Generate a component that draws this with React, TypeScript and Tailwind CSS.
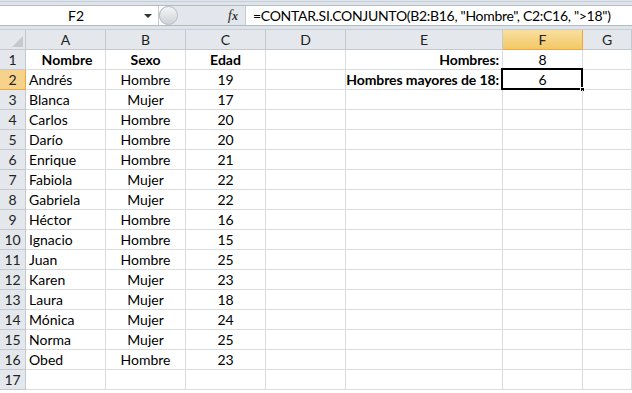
import React from "react";

const rows: [string, string, string][] = [
  ["Andrés", "Hombre", "19"],
  ["Blanca", "Mujer", "17"],
  ["Carlos", "Hombre", "20"],
  ["Darío", "Hombre", "20"],
  ["Enrique", "Hombre", "21"],
  ["Fabiola", "Mujer", "22"],
  ["Gabriela", "Mujer", "22"],
  ["Héctor", "Hombre", "16"],
  ["Ignacio", "Hombre", "15"],
  ["Juan", "Hombre", "25"],
  ["Karen", "Mujer", "23"],
  ["Laura", "Mujer", "18"],
  ["Mónica", "Mujer", "24"],
  ["Norma", "Mujer", "25"],
  ["Obed", "Hombre", "23"],
];

const font = { fontFamily: "Lato, 'Open Sans', sans-serif" };

function Cell({ children, className = "" }: { children?: React.ReactNode; className?: string }) {
  return (
    <div className={`h-[20px] border-r border-b border-[#dadcdd] flex items-center overflow-visible whitespace-nowrap text-[14px] text-black ${className}`}>
      {children}
    </div>
  );
}

export default function App() {
  const cols = ["A", "B", "C", "D", "E", "F", "G"];
  const widths = ["w-[80px]", "w-[80px]", "w-[80px]", "w-[80px]", "w-[157px]", "w-[80px]", "flex-1"];
  const allRows: { n: number; a: string; b: string; c: string; bold?: boolean }[] = [
    { n: 1, a: "Nombre", b: "Sexo", c: "Edad", bold: true },
    ...rows.map((r, i) => ({ n: i + 2, a: r[0], b: r[1], c: r[2] })),
    { n: 17, a: "", b: "", c: "" },
  ];
  return (
    <div className="w-[632px] h-[393px] bg-white overflow-hidden relative" style={font}>
      {/* top formula bar */}
      <div className="h-[30px] bg-[#dfe4ea] flex flex-col">
        <div className="h-[2px] border-b border-[#c7ced6]" />
        <div className="h-[3px]" />
        <div className="h-[21px] flex bg-white border-y border-[#b1bbc6]">
          <div className="w-[159px] flex items-center relative border-r border-[#c5ccd3]">
            <div className="flex-1 text-center text-[14px] text-black pl-[8px]">F2</div>
            <div className="w-0 h-0 border-l-[4px] border-r-[4px] border-t-[4px] border-l-transparent border-r-transparent border-t-[#333] mr-[6px]" />
          </div>
          <div className="w-[86px] flex items-center bg-[#e3e6ea] rounded-l-full border-l border-[#b7bec6] relative">
            <div className="w-[19px] h-[19px] rounded-full bg-gradient-to-b from-[#f4f5f6] to-[#cfd3d8] border border-[#b9bfc6] ml-[-1px]" />
            <div className="flex-1" />
            <span className="mr-[7px] text-[15px] italic text-[#333]" style={{ fontFamily: "'Liberation Serif', serif" }}>
              f<span className="text-[12px] font-bold">x</span>
            </span>
          </div>
          <div className="flex-1 flex items-center pl-[7px] text-[14px] tracking-[-0.3px] text-black border-l border-[#c5ccd3] whitespace-nowrap">
            =CONTAR.SI.CONJUNTO(B2:B16, "Hombre", C2:C16, "&gt;18")
          </div>
        </div>
        <div className="flex-1 border-b border-[#c7ced6]" />
      </div>

      {/* column headers */}
      <div className="flex h-[20px]">
        <div className="w-[26px] h-[20px] bg-[#e4e8ec] border-r border-b border-[#c4c9cf] relative">
          <svg className="absolute right-[2px] bottom-[2px]" width="11" height="11">
            <polygon points="11,0 11,11 0,11" fill="#c5cad0" />
          </svg>
        </div>
        {cols.map((c, i) => (
          <div
            key={c}
            className={`${widths[i]} h-[20px] flex items-center justify-center text-[14px] ${
              c === "F"
                ? "bg-gradient-to-b from-[#f9df9f] to-[#f3c865] border-r border-b border-[#f0a742] text-[#222]"
                : "bg-[#e4e8ec] border-r border-b border-[#c4c9cf] text-[#222]"
            }`}
          >
            {c}
          </div>
        ))}
      </div>

      {allRows.map((r) => {
        const sel = r.n === 2;
        return (
          <div key={r.n} className="flex h-[20px]">
            <div
              className={`w-[26px] h-[20px] flex items-center justify-center text-[14px] border-r border-b ${
                sel ? "bg-[#f7d28b] border-[#f0a742] text-[#222]" : "bg-[#e4e8ec] border-[#c4c9cf] text-[#222]"
              }`}
            >
              {r.n}
            </div>
            <Cell className={`w-[80px] pl-[3px] ${r.bold ? "font-bold justify-center" : ""}`}>{r.a}</Cell>
            <Cell className={`w-[80px] justify-center ${r.bold ? "font-bold" : ""}`}>{r.b}</Cell>
            <Cell className={`w-[80px] justify-center ${r.bold ? "font-bold" : ""}`}>{r.c}</Cell>
            <Cell className="w-[80px]" />
            <Cell className="w-[157px] justify-end pr-[3px] font-bold tracking-[-0.1px]">
              {r.n === 1 ? "Hombres:" : r.n === 2 ? "Hombres mayores de 18:" : ""}
            </Cell>
            <Cell className="w-[80px] justify-center relative">
              {r.n === 1 ? "8" : r.n === 2 ? "6" : ""}
              {sel && (
                <>
                  <div className="absolute left-[-2px] top-[-2px] right-[-1px] bottom-[-1px] border-2 border-black pointer-events-none" />
                  <div className="absolute right-[-3px] bottom-[-3px] w-[5px] h-[5px] bg-black border border-white" />
                </>
              )}
            </Cell>
            <Cell className="flex-1" />
          </div>
        );
      })}
    </div>
  );
}
